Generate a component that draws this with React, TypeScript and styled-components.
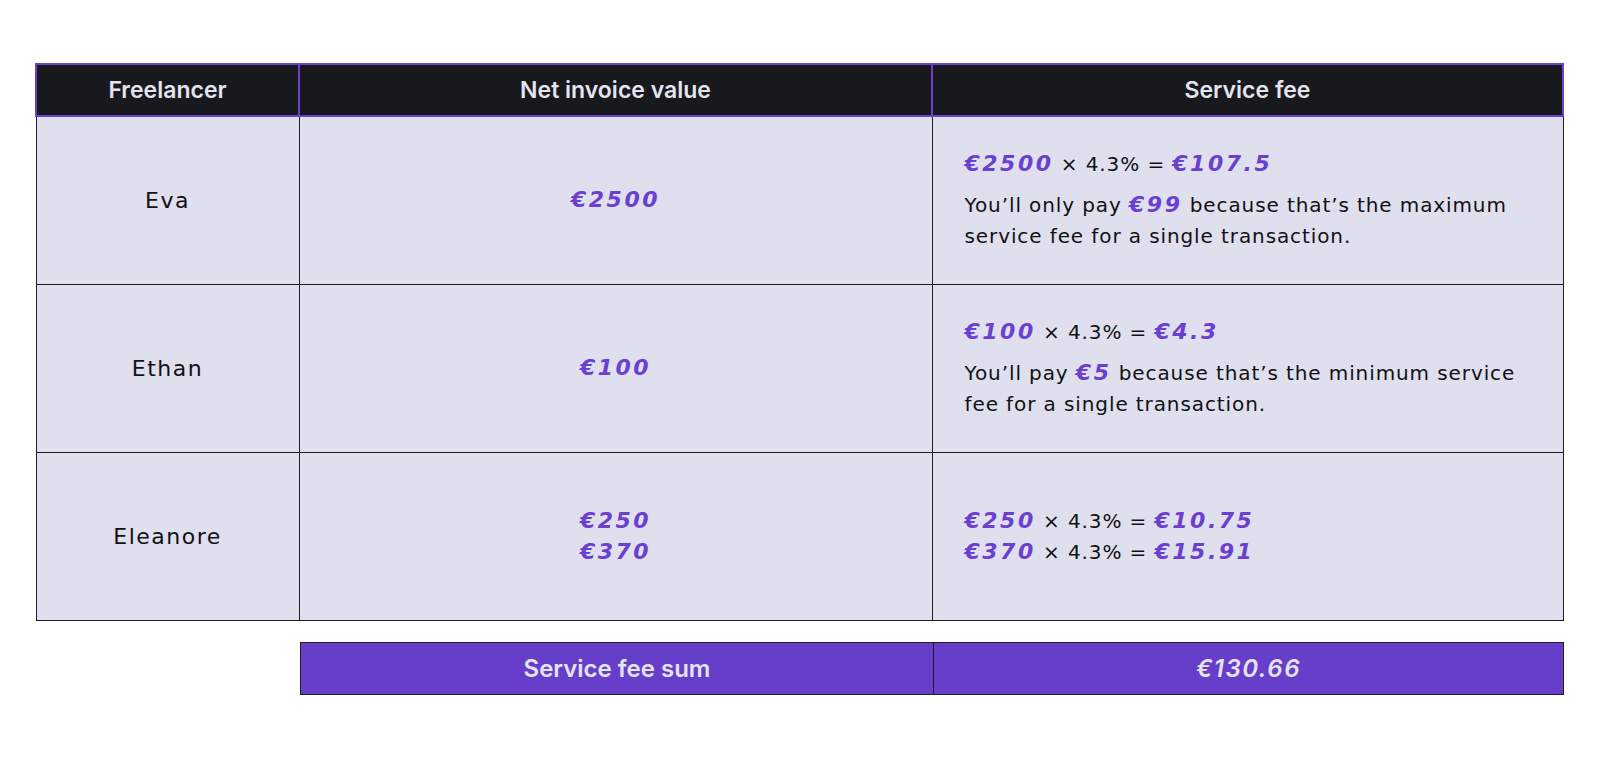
import React from 'react'
import styled, { createGlobalStyle } from 'styled-components'

const GlobalStyle = createGlobalStyle`
  html, body {
    margin: 0;
    background: #ffffff;
  }
`

const Page = styled.div`
  width: 1600px;
  height: 760px;
  box-sizing: border-box;
  padding: 63px 0 0 35px;
  display: flex;
  flex-direction: column;
  gap: 21px;
  font-family: 'DejaVu Sans', sans-serif;
  color: #111114;
`

const FeeTable = styled.table`
  width: 1527px;
  border-collapse: collapse;
  table-layout: fixed;
`

const HeadCell = styled.th`
  height: 50px;
  padding: 0;
  background: #18191d;
  border: 2px solid #6a40d0;
  color: #e4e3f0;
  font-family: Inter, sans-serif;
  font-weight: 600;
  font-size: 23px;
  text-align: center;
`

const Cell = styled.td<{ $align?: 'left' | 'center' }>`
  height: 167px;
  padding: 0 32px;
  background: #e0dfee;
  border: 1.5px solid #1e1e22;
  text-align: ${(p) => p.$align ?? 'center'};
  vertical-align: middle;
  font-size: 20px;
  letter-spacing: 0.9px;
  line-height: 31px;
`

const Name = styled.span`
  font-size: 22px;
  letter-spacing: 1.5px;
`

const Amount = styled.span`
  color: #6a40d0;
  font-weight: 700;
  font-style: italic;
  font-size: 22px;
  letter-spacing: 2.5px;
  line-height: 1;
`

const Formula = styled.div``

const Note = styled.p`
  margin: 10px 0 0;
`

const SumBar = styled.div`
  margin-left: 265px;
  width: 1264px;
  height: 53px;
  box-sizing: border-box;
  display: grid;
  grid-template-columns: 632px 1fr;
  background: #673ec9;
  border: 1.5px solid #1e1e22;
`

const SumCell = styled.div<{ $amount?: boolean }>`
  display: flex;
  align-items: center;
  justify-content: center;
  color: #e4e3f0;
  font-family: Inter, sans-serif;
  font-weight: 600;
  font-size: 24px;
  font-style: ${(p) => (p.$amount ? 'italic' : 'normal')};
  letter-spacing: ${(p) => (p.$amount ? '1.5px' : '0')};
  & + & {
    border-left: 1.5px solid #1e1e22;
  }
`

type Row = {
  name: string
  invoices: string[]
  fees: string[]
  note?: React.ReactNode
}

const rows: Row[] = [
  {
    name: 'Eva',
    invoices: ['€2500'],
    fees: ['€107.5'],
    note: (
      <>
        You’ll only pay <Amount>€99</Amount> because that’s the maximum service fee for a single transaction.
      </>
    ),
  },
  {
    name: 'Ethan',
    invoices: ['€100'],
    fees: ['€4.3'],
    note: (
      <>
        You’ll pay <Amount>€5</Amount> because that’s the minimum service fee for a single transaction.
      </>
    ),
  },
  {
    name: 'Eleanore',
    invoices: ['€250', '€370'],
    fees: ['€10.75', '€15.91'],
  },
]

export default function App() {
  return (
    <Page>
      <GlobalStyle />
      <FeeTable>
        <colgroup>
          <col style={{ width: 263 }} />
          <col style={{ width: 633 }} />
          <col style={{ width: 631 }} />
        </colgroup>
        <thead>
          <tr>
            <HeadCell>Freelancer</HeadCell>
            <HeadCell>Net invoice value</HeadCell>
            <HeadCell>Service fee</HeadCell>
          </tr>
        </thead>
        <tbody>
          {rows.map((row) => (
            <tr key={row.name}>
              <Cell>
                <Name>{row.name}</Name>
              </Cell>
              <Cell>
                {row.invoices.map((v) => (
                  <div key={v}>
                    <Amount>{v}</Amount>
                  </div>
                ))}
              </Cell>
              <Cell $align="left">
                {row.invoices.map((v, i) => (
                  <Formula key={v}>
                    <Amount>{v}</Amount> × 4.3% = <Amount>{row.fees[i]}</Amount>
                  </Formula>
                ))}
                {row.note && <Note>{row.note}</Note>}
              </Cell>
            </tr>
          ))}
        </tbody>
      </FeeTable>
      <SumBar>
        <SumCell>Service fee sum</SumCell>
        <SumCell $amount>€130.66</SumCell>
      </SumBar>
    </Page>
  )
}
